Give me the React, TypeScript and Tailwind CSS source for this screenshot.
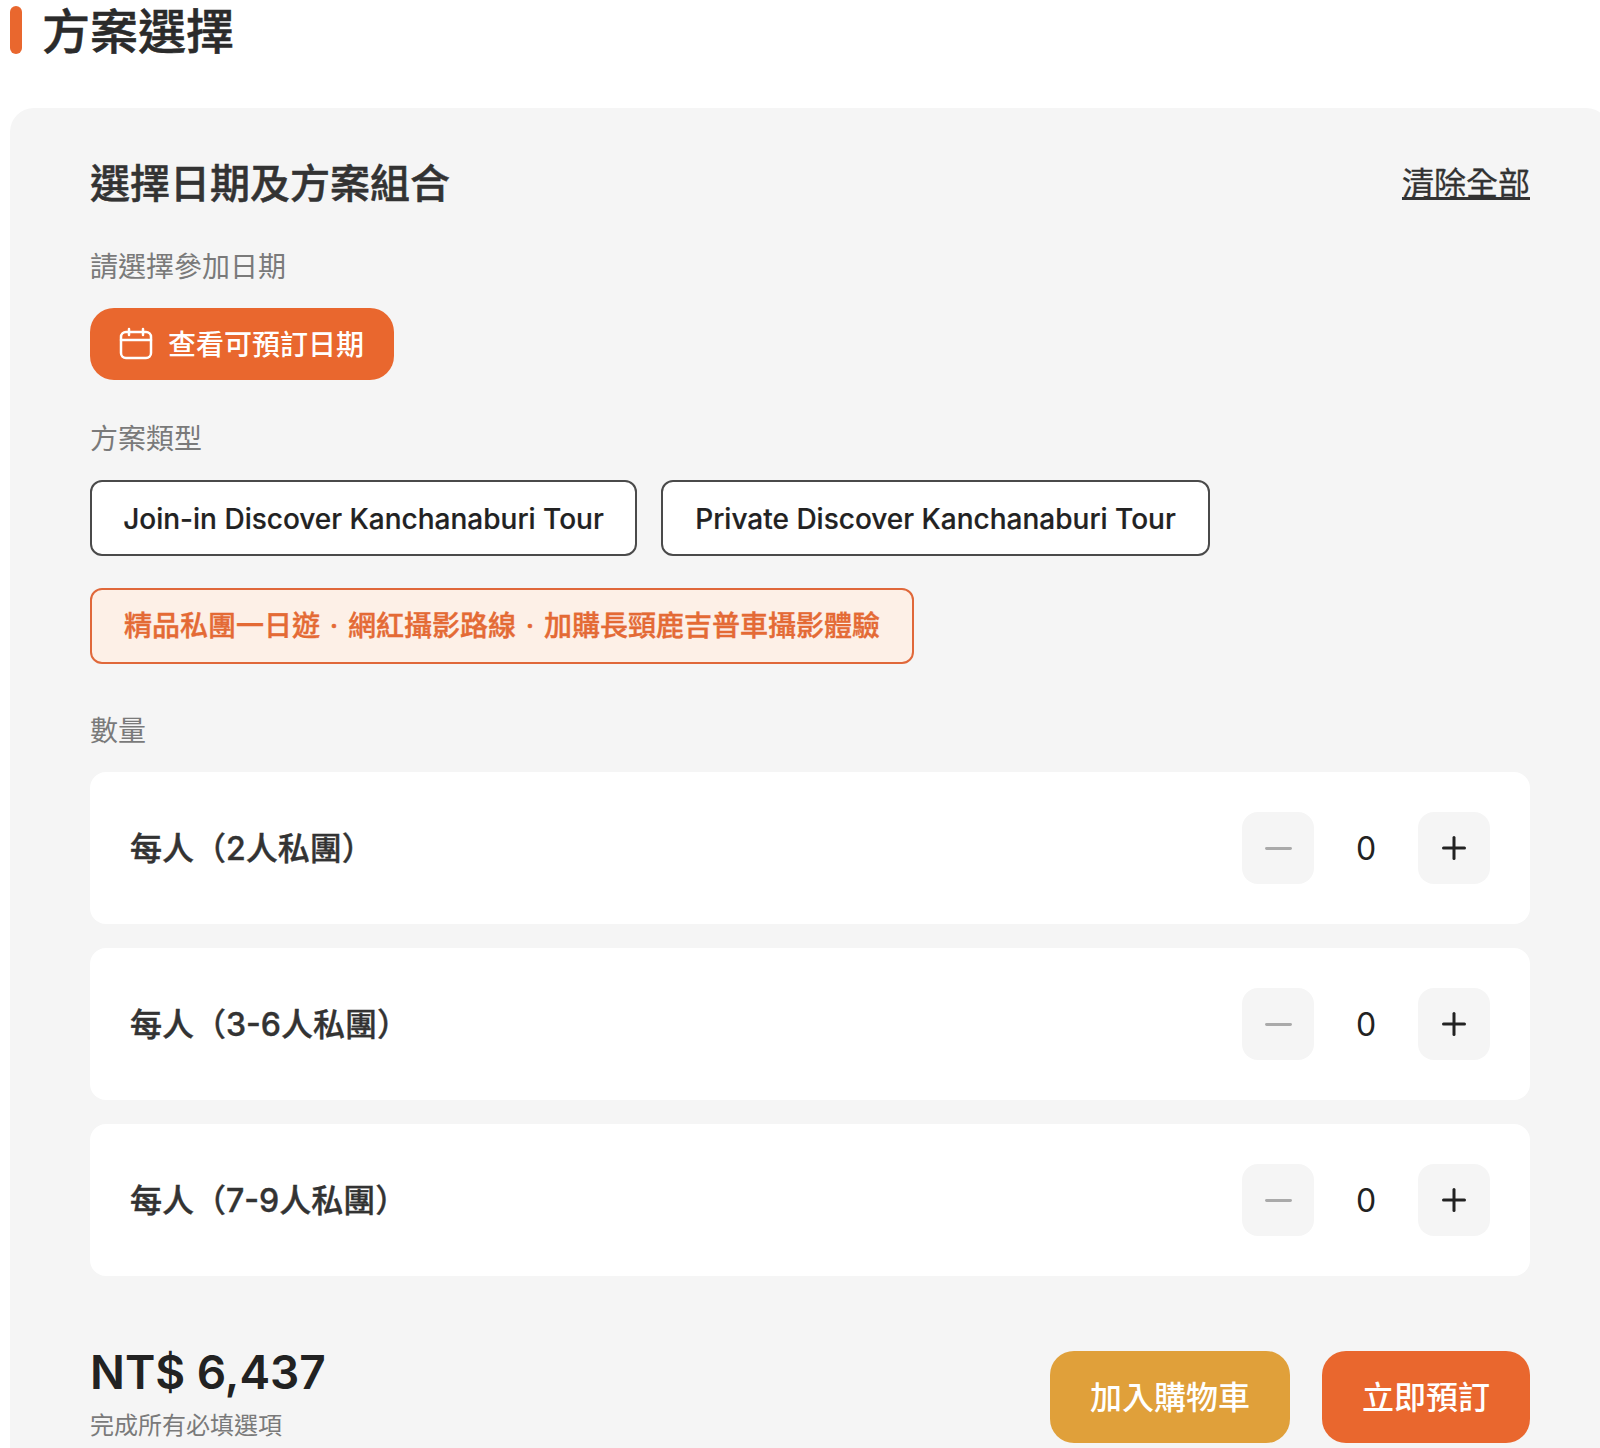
import { Minus, Plus } from "lucide-react";

const FONT = "font-['Inter','Noto_Sans_CJK_TC',sans-serif]";

const rows = ["每人（2人私團）", "每人（3-6人私團）", "每人（7-9人私團）"];

const Dot = () => <span className="inline-block w-[1em] text-center">·</span>;

const QtyRow = ({ label }: { label: string }) => {
  return (
    <div className="flex h-[152px] items-center justify-between rounded-2xl bg-white px-10">
      <span className="pt-0.5 text-[32px] font-medium text-[#333333] [-webkit-text-stroke:0.4px]">{label}</span>
      <div className="flex items-center">
        <button className="flex h-[72px] w-[72px] items-center justify-center rounded-2xl bg-[#f5f5f5] text-[#aaaaaa]">
          <Minus size={41} strokeWidth={1.75} />
        </button>
        <span className="w-[104px] pt-0.5 text-center text-[32px] text-[#222222]">0</span>
        <button className="flex h-[72px] w-[72px] items-center justify-center rounded-2xl bg-[#f5f5f5] text-[#222222]">
          <Plus size={36} strokeWidth={2} />
        </button>
      </div>
    </div>
  );
};

export default function App() {
  return (
    <div className={`${FONT} h-[1448px] w-[1600px] overflow-hidden bg-white`}>
      <div className="flex items-center pl-2.5 pt-1.5">
        <div className="h-12 w-3 rounded-md bg-[#e9672e]" />
        <h1 className="ml-5 h-12 text-[48px] leading-[52px] font-medium text-[#2b2b2b] [-webkit-text-stroke:0.5px]">方案選擇</h1>
      </div>

      <div className="ml-2.5 mt-[54px] w-[1600px] rounded-3xl bg-[#f5f5f5] px-20 pb-10 pt-12">
        <div className="flex w-[1440px] items-center justify-between">
          <h2 className="text-[40px] leading-[56px] font-medium text-[#333333] [-webkit-text-stroke:0.5px]">選擇日期及方案組合</h2>
          <a className="text-[32px] leading-[44px] text-[#333333] underline [-webkit-text-stroke:0.3px]">清除全部</a>
        </div>

        <p className="mt-[35px] text-[28px] leading-10 text-[#7a7a7a]">請選擇參加日期</p>
        <button className="mt-[21px] flex h-[72px] w-[304px] items-center rounded-3xl bg-[#e9672e] pl-7 text-[28px] font-medium text-white">
          <svg width="36" height="36" viewBox="0 0 36 36" fill="none" stroke="currentColor" strokeWidth="2.5" strokeLinecap="round" strokeLinejoin="round">
            <rect x="3" y="6" width="30" height="26" rx="5" />
            <path d="M3 14h30M11 3v6M25 3v6" />
          </svg>
          <span className="ml-[14px] pt-0.5">查看可預訂日期</span>
        </button>

        <p className="mt-[39px] text-[28px] leading-10 text-[#7a7a7a]">方案類型</p>
        <div className="mt-[21px] flex gap-6">
          <button className="h-[76px] w-[547px] rounded-xl border-2 border-[#4a4a4a] bg-white pt-0.5 text-[28px] font-medium text-[#222222] [-webkit-text-stroke:0.2px]">
            Join-in Discover Kanchanaburi Tour
          </button>
          <button className="h-[76px] w-[549px] rounded-xl border-2 border-[#4a4a4a] bg-white pt-0.5 text-[28px] font-medium text-[#222222] [-webkit-text-stroke:0.2px]">
            Private Discover Kanchanaburi Tour
          </button>
        </div>
        <button className="mt-8 block h-[76px] w-[824px] rounded-xl border-2 border-[#e0683a] bg-[#fdf0e7] text-[28px] font-medium text-[#e46a35] [-webkit-text-stroke:0.4px]">
          精品私團一日遊
          <Dot />
          網紅攝影路線
          <Dot />
          加購長頸鹿吉普車攝影體驗
        </button>

        <p className="mt-[47px] text-[28px] leading-10 text-[#7a7a7a]">數量</p>
        <div className="mt-[21px] flex w-[1440px] flex-col gap-6">
          {rows.map((label) => (
            <QtyRow key={label} label={label} />
          ))}
        </div>

        <div className="mt-[75px] flex w-[1440px] items-start justify-between">
          <div className="-mt-[5px]">
            <div className="text-[46px] leading-[52px] font-semibold text-[#222222]">NT$ 6,437</div>
            <div className="mt-3 text-[24px] leading-8 text-[#7a7a7a]">完成所有必填選項</div>
          </div>
          <div className="flex gap-8">
            <button className="h-[92px] w-[240px] rounded-3xl bg-[#e0a03a] pt-0.5 text-[32px] font-medium text-white">加入購物車</button>
            <button className="h-[92px] w-[208px] rounded-3xl bg-[#e9672e] pt-0.5 text-[32px] font-medium text-white">立即預訂</button>
          </div>
        </div>
      </div>
    </div>
  );
}
